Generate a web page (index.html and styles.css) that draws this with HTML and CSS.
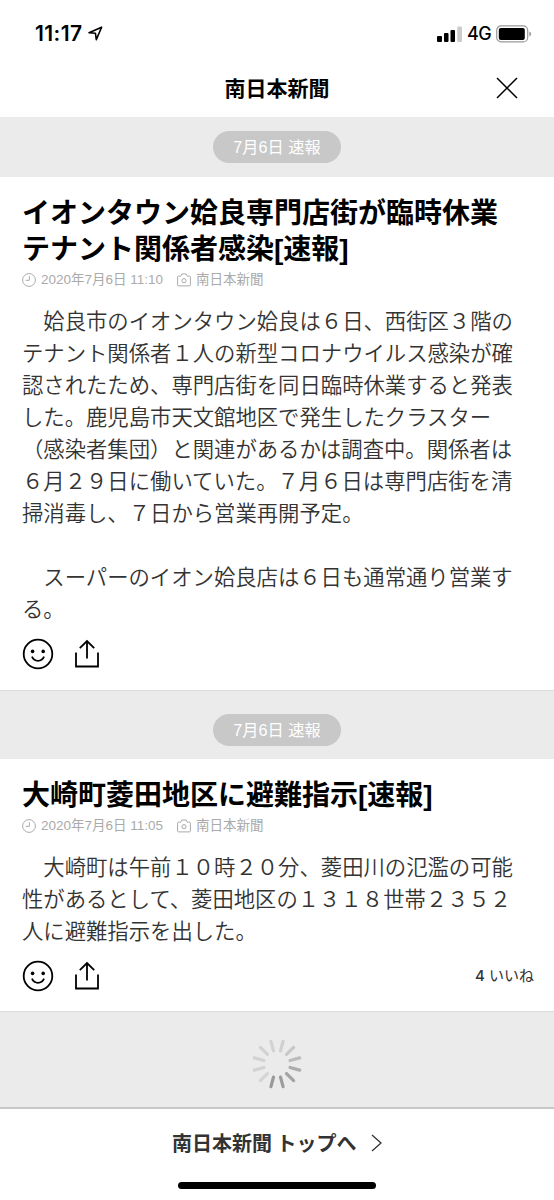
FILE: index.html
```html
<!DOCTYPE html>
<html lang="ja">
<head>
    <meta charset="UTF-8">
    <title>南日本新聞</title>
    <link rel="stylesheet" href="styles.css">
</head>
<body>
    <!-- shared icons -->
    <svg width="0" height="0" class="defs">
        <symbol id="icon-clock" viewBox="0 0 14 14">
            <circle cx="7" cy="7" r="6.4"/>
            <path d="M7.4 3.2V7.3H3.6"/>
        </symbol>
        <symbol id="icon-camera" viewBox="0 0 14 14">
            <path d="M1.6 3.1H3.7L4.8 1H9.2L10.3 3.1H12.4Q13.4 3.1 13.4 4.1V11.9Q13.4 12.9 12.4 12.9H1.6Q.6 12.9 .6 11.9V4.1Q.6 3.1 1.6 3.1Z"/>
            <circle cx="7" cy="7.7" r="2.1"/>
        </symbol>
        <symbol id="icon-smile" viewBox="0 0 32 32">
            <circle cx="16" cy="16" r="14.3"/>
            <path d="M10.2 19.2C12.4 24 19.6 24 21.8 19.2"/>
            <circle class="eye" cx="10.6" cy="13.4" r="1.8"/>
            <circle class="eye" cx="21.2" cy="13.4" r="1.8"/>
        </symbol>
        <symbol id="icon-share" viewBox="0 0 26 30">
            <path d="M2 13.5V27.5H24V13.5M13 19.5V2M5.8 9.2L13 2L20.2 9.2"/>
        </symbol>
    </svg>

    <div class="status-bar">
        <div class="time">11:17</div>
        <svg class="location" width="15" height="15" viewBox="0 0 15 15">
            <path d="M1 6.8L13.6 1.2L8.3 13.6L7.4 7.2Z"/>
        </svg>
        <svg class="signal" width="26" height="16" viewBox="0 0 26 16">
            <rect x="0" y="10" width="5" height="6" rx="1"/>
            <rect x="7" y="7" width="4.5" height="9" rx="1"/>
            <rect x="13.5" y="4" width="4.5" height="12" rx="1"/>
            <rect class="off" x="20.3" y="0.5" width="4.7" height="15.5" rx="1"/>
        </svg>
        <div class="network">4G</div>
        <svg class="battery" width="36" height="18" viewBox="0 0 36 18">
            <rect class="case" x="0.7" y="0.9" width="31" height="16" rx="4.5"/>
            <rect x="2.8" y="3" width="26" height="12" rx="2"/>
            <path class="cap" d="M33.3 6.6Q35.2 7.3 35.2 9T33.3 11.4Z"/>
        </svg>
    </div>

    <header class="header">
        <h1>南日本新聞</h1>
        <svg class="close" width="22" height="22" viewBox="0 0 22 22">
            <path d="M1 1L21 21M21 1L1 21"/>
        </svg>
    </header>

    <main>
        <div class="date-row first"><span class="date">7月6日 速報</span></div>
        <article class="article">
            <h2>イオンタウン姶良専門店街が臨時休業<br>テナント関係者感染[速報]</h2>
            <div class="meta">
                <svg><use href="#icon-clock"/></svg>
                <span class="posted">2020年7月6日 11:10</span>
                <svg><use href="#icon-camera"/></svg>
                <span>南日本新聞</span>
            </div>
            <p>　姶良市のイオンタウン姶良は６日、西街区３階の<br>テナント関係者１人の新型コロナウイルス感染が確<br>認されたため、専門店街を同日臨時休業すると発表<br>した。鹿児島市天文館地区で発生したクラスター<br>（感染者集団）と関連があるかは調査中。関係者は<br>６月２９日に働いていた。７月６日は専門店街を清<br>掃消毒し、７日から営業再開予定。</p>
            <p>　スーパーのイオン姶良店は６日も通常通り営業す<br>る。</p>
            <div class="actions">
                <svg class="smile"><use href="#icon-smile"/></svg>
                <svg class="share"><use href="#icon-share"/></svg>
            </div>
        </article>

        <div class="date-row"><span class="date">7月6日 速報</span></div>
        <article class="article">
            <h2>大崎町菱田地区に避難指示[速報]</h2>
            <div class="meta">
                <svg><use href="#icon-clock"/></svg>
                <span class="posted">2020年7月6日 11:05</span>
                <svg><use href="#icon-camera"/></svg>
                <span>南日本新聞</span>
            </div>
            <p>　大崎町は午前１０時２０分、菱田川の氾濫の可能<br>性があるとして、菱田地区の１３１８世帯２３５２<br>人に避難指示を出した。</p>
            <div class="actions">
                <svg class="smile"><use href="#icon-smile"/></svg>
                <svg class="share"><use href="#icon-share"/></svg>
                <span class="likes"><b>4</b> いいね</span>
            </div>
        </article>

        <div class="loading">
            <svg width="52" height="52" viewBox="-26 -26 52 52">
                <path d="M0-13.5V-23.5" stroke="#d0d0d0" transform="rotate(15)"/>
                <path d="M0-13.5V-23.5" stroke="#c8c8c8" transform="rotate(45)"/>
                <path d="M0-13.5V-23.5" stroke="#bcbcbc" transform="rotate(75)"/>
                <path d="M0-13.5V-23.5" stroke="#acacac" transform="rotate(105)"/>
                <path d="M0-13.5V-23.5" stroke="#a4a4a4" transform="rotate(135)"/>
                <path d="M0-13.5V-23.5" stroke="#9c9c9c" transform="rotate(165)"/>
                <path d="M0-13.5V-23.5" stroke="#999" transform="rotate(195)"/>
                <path d="M0-13.5V-23.5" stroke="#d4d4d4" transform="rotate(225)"/>
                <path d="M0-13.5V-23.5" stroke="#d2d2d2" transform="rotate(255)"/>
                <path d="M0-13.5V-23.5" stroke="#d2d2d2" transform="rotate(285)"/>
                <path d="M0-13.5V-23.5" stroke="#d2d2d2" transform="rotate(315)"/>
                <path d="M0-13.5V-23.5" stroke="#d2d2d2" transform="rotate(345)"/>
            </svg>
        </div>
    </main>

    <footer class="footer">
        <div class="top-link">
            <span>南日本新聞 トップへ</span>
            <svg width="12" height="18" viewBox="0 0 12 18">
                <path d="M1 1L10 9L1 17"/>
            </svg>
        </div>
        <div class="home-bar"></div>
    </footer>
</body>
</html>
```
FILE: styles.css
```css
* {
    box-sizing: border-box;
}

body {
    margin: 0;
    height: 1200px;
    display: flex;
    flex-direction: column;
    overflow: hidden;
    background-color: #fff;
    color: #000;
    font-family: "Liberation Sans", "Noto Sans CJK JP", sans-serif;
}

svg {
    display: block;
    flex: none;
    fill: none;
}

.defs {
    position: absolute;
}

h1, h2, p {
    margin: 0;
}

/* Status bar */
.status-bar {
    height: 60px;
    flex: none;
    display: flex;
    align-items: center;
    padding: 7px 22px 0 35px;
}

.time {
    width: 49px;
    font-family: Inter, sans-serif;
    font-size: 21px;
    font-weight: 600;
    letter-spacing: 0.4px;
    white-space: nowrap;
}

.location {
    margin-left: 4px;
    stroke: #000;
    stroke-width: 1.6;
    stroke-linejoin: round;
}

.signal {
    margin-left: auto;
    fill: #000;
}

.signal .off {
    fill: #ccc;
}

.network {
    width: 25px;
    margin: 0 4px;
    font-family: Inter, sans-serif;
    font-size: 18px;
    font-weight: 500;
    letter-spacing: -0.5px;
}

.battery {
    fill: #000;
}

.battery .case {
    fill: none;
    stroke: #999;
    stroke-width: 1.2;
}

.battery .cap {
    fill: #999;
}

/* Header */
.header {
    height: 57px;
    flex: none;
    display: flex;
    justify-content: center;
    align-items: center;
    position: relative;
}

.header h1 {
    padding-bottom: 4px;
    font-family: "Noto Sans CJK JP", sans-serif;
    font-size: 21px;
    font-weight: bold;
    line-height: 30px;
}

.close {
    position: absolute;
    right: 36px;
    top: 17px;
    stroke: #000;
    stroke-width: 1.5;
}

/* Articles */
.date-row {
    height: 69px;
    display: flex;
    justify-content: center;
    align-items: flex-start;
    padding-top: 23px;
    border-top: 1px solid #dcdcdc;
    background-color: #ebebeb;
}

.date-row.first {
    height: 60px;
    padding-top: 14px;
    border-top: 0;
}

.date {
    width: 128px;
    height: 32px;
    border-radius: 16px;
    background-color: #c8c8c8;
    color: #fff;
    font-size: 16.2px;
    line-height: 32px;
    text-align: center;
}

.article {
    padding: 19px 20px 20px 22px;
}

.article:last-of-type {
    padding-bottom: 19px;
}

.article h2 {
    font-size: 28px;
    font-weight: bold;
    line-height: 36px;
    white-space: nowrap;
}

.meta {
    height: 18px;
    display: flex;
    align-items: center;
    margin-top: 3px;
    margin-bottom: 15px;
    color: #aaa;
    font-size: 13.5px;
    line-height: 18px;
    white-space: nowrap;
}

.meta svg {
    width: 14px;
    height: 14px;
    margin-right: 5px;
    stroke: #aaa;
}

.posted {
    width: 136px;
}

.article p {
    color: #333;
    font-family: "Noto Sans CJK JP", sans-serif;
    font-size: 21.35px;
    font-weight: 350;
    line-height: 32px;
    white-space: nowrap;
}

.article p + p {
    margin-top: 32px;
}

.actions {
    height: 32px;
    display: flex;
    align-items: center;
    margin-top: 14px;
    color: #333;
}

.actions svg {
    stroke: #000;
    stroke-width: 1.8;
}

.smile {
    width: 32px;
    height: 32px;
    stroke-linecap: round;
}

.smile + .share {
    width: 26px;
    height: 30px;
    margin-left: 20px;
}

.eye {
    fill: #000;
    stroke: none;
}

.likes {
    margin-left: auto;
    padding-bottom: 3px;
    font-size: 15px;
}

.likes b {
    font-family: Inter, sans-serif;
    font-weight: 500;
}

.loading {
    height: 96px;
    display: flex;
    justify-content: center;
    padding-top: 26px;
    border-top: 1px solid #dcdcdc;
    background-color: #ebebeb;
}

.loading svg {
    stroke-width: 3.2;
    stroke-linecap: round;
}

/* Footer */
.footer {
    flex: 1;
    border-top: 2px solid #c8c8c8;
    background-color: #fff;
}

.top-link {
    display: flex;
    align-items: center;
    height: 68px;
    padding-left: 172px;
    color: #333;
    font-family: "Noto Sans CJK JP", sans-serif;
    font-size: 20px;
    font-weight: bold;
}

.top-link span {
    padding-bottom: 2px;
}

.top-link svg {
    margin-left: 14px;
    stroke: #333;
    stroke-width: 1.3;
}

.home-bar {
    width: 198px;
    height: 7px;
    margin: 5px auto 0;
    border-radius: 4px;
    background-color: #000;
}
```
